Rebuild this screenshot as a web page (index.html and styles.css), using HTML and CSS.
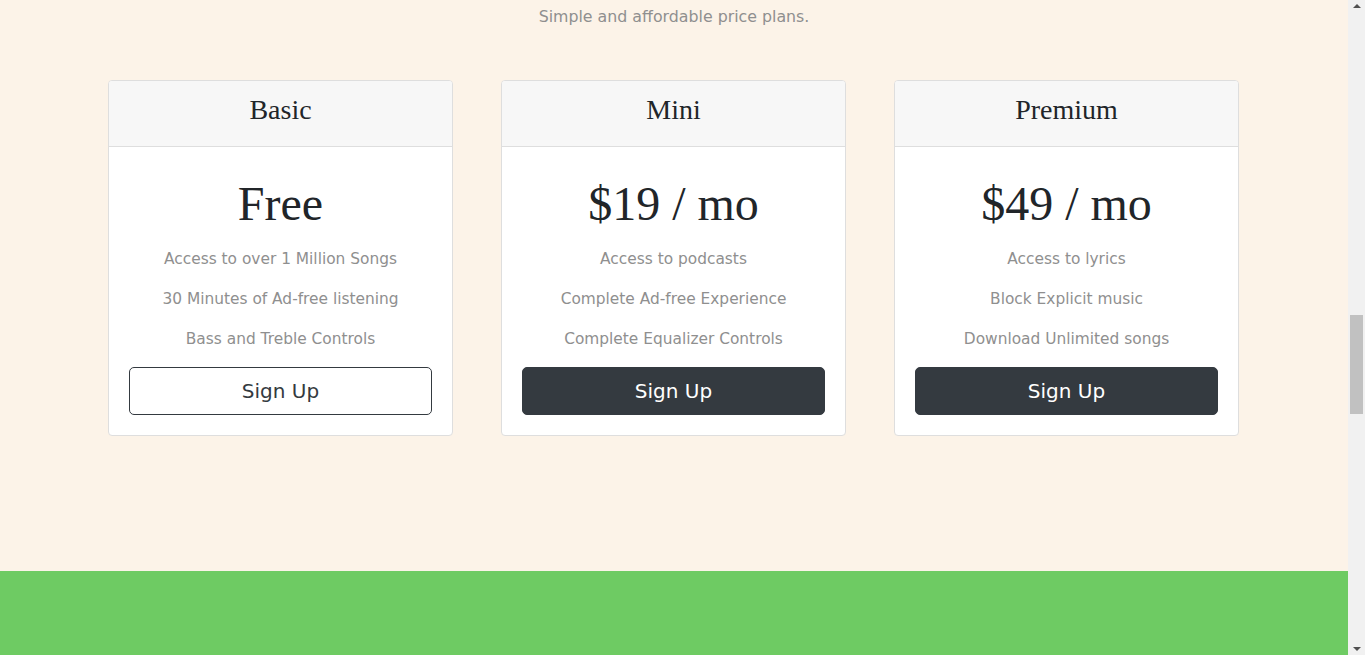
FILE: index.html
```html
<!DOCTYPE html>
<html lang="en">
<head>
<meta charset="utf-8">
<title>Pricing</title>
<link rel="stylesheet" href="styles.css">
</head>
<body>
<div class="viewport">
  <main class="page">
    <section class="pricing" id="pricing">
      <p class="pricing-sub">Simple and affordable price plans.</p>
      <div class="plans">
        <div class="card">
          <div class="card-header"><h3>Basic</h3></div>
          <div class="card-body">
            <h1 class="price">Free</h1>
            <ul class="features">
              <li>Access to over 1 Million Songs</li>
              <li>30 Minutes of Ad-free listening</li>
              <li>Bass and Treble Controls</li>
            </ul>
            <button class="btn btn-outline">Sign Up</button>
          </div>
        </div>
        <div class="card">
          <div class="card-header"><h3>Mini</h3></div>
          <div class="card-body">
            <h1 class="price">$19 / mo</h1>
            <ul class="features">
              <li>Access to podcasts</li>
              <li>Complete Ad-free Experience</li>
              <li>Complete Equalizer Controls</li>
            </ul>
            <button class="btn btn-dark">Sign Up</button>
          </div>
        </div>
        <div class="card">
          <div class="card-header"><h3>Premium</h3></div>
          <div class="card-body">
            <h1 class="price">$49 / mo</h1>
            <ul class="features">
              <li>Access to lyrics</li>
              <li>Block Explicit music</li>
              <li>Download Unlimited songs</li>
            </ul>
            <button class="btn btn-dark">Sign Up</button>
          </div>
        </div>
      </div>
    </section>
    <section class="cta"></section>
  </main>
  <div class="scrollbar" aria-hidden="true">
    <div class="sb-btn"><span class="arrow-up"></span></div>
    <div class="sb-track"><div class="sb-thumb"></div></div>
    <div class="sb-btn"><span class="arrow-down"></span></div>
  </div>
</div>
</body>
</html>
```
FILE: styles.css
```css
html, body {
  margin: 0;
  height: 100%;
  overflow: hidden;
}
body {
  background: #fcf3e8;
  font-family: "DejaVu Sans", "Liberation Sans", sans-serif;
}
.viewport {
  display: flex;
  height: 100vh;
}
.page {
  flex: 1;
  min-width: 0;
  overflow: hidden;
  background: #fcf3e8;
}
.pricing {
  padding: 5px 0 135px;
  text-align: center;
}
.pricing-sub {
  margin: 0 0 51px;
  font-size: 15.8px;
  line-height: 24px;
  color: #8f8f8f;
}
.plans {
  display: grid;
  grid-template-columns: repeat(3, 345px);
  gap: 48px;
  justify-content: center;
  padding-right: 1px;
}
.card {
  box-sizing: border-box;
  background: #fff;
  border: 1px solid #dedede;
  border-radius: 4px;
  overflow: hidden;
}
.card-header {
  background: #f7f7f7;
  border-bottom: 1px solid #dedede;
  padding: 12px 20px;
}
.card-header h3 {
  margin: 0 0 7px;
  font-family: "Liberation Serif", "Times New Roman", serif;
  font-weight: 400;
  font-size: 28px;
  line-height: 1.2;
  color: #212529;
}
.card-body {
  padding: 20px;
}
.price {
  margin: 8px 0 7px;
  font-family: "Liberation Serif", "Times New Roman", serif;
  font-weight: 400;
  font-size: 48px;
  line-height: 1.2;
  color: #212529;
}
.features {
  list-style: none;
  margin: 0 0 8px;
  padding: 0;
}
.features li {
  font-size: 15.4px;
  line-height: 40px;
  color: #8f8f8f;
}
.btn {
  display: block;
  width: 100%;
  height: 48px;
  box-sizing: border-box;
  border: 1px solid #343a40;
  border-radius: 5px;
  font-family: "DejaVu Sans", "Liberation Sans", sans-serif;
  font-size: 20px;
  cursor: pointer;
}
.btn-outline {
  background: #fff;
  color: #343a40;
}
.btn-dark {
  background: #343a40;
  color: #fff;
}
.cta {
  background: #6ecb63;
  height: 200px;
}
.scrollbar {
  width: 17px;
  flex: none;
  display: flex;
  flex-direction: column;
  background: #f1f1f1;
}
.sb-btn {
  height: 17px;
  display: flex;
  align-items: center;
  justify-content: center;
}
.arrow-up, .arrow-down {
  width: 0;
  height: 0;
  border-left: 4px solid transparent;
  border-right: 4px solid transparent;
}
.arrow-up {
  border-bottom: 4px solid #505050;
  margin-top: -5px;
}
.arrow-down {
  border-top: 4px solid #505050;
  margin-bottom: -5px;
}
.sb-track {
  flex: 1;
  padding: 298px 2px 0;
}
.sb-thumb {
  height: 99px;
  background: #c1c1c1;
}
```
